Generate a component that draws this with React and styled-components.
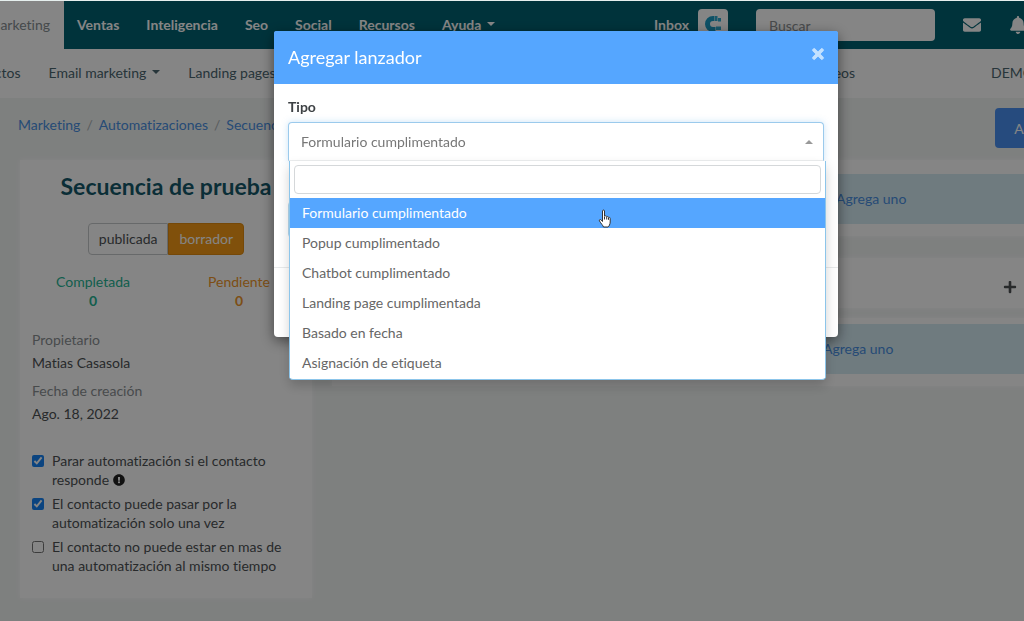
import React from "react"
import styled, { createGlobalStyle } from "styled-components"
import { FaEnvelope, FaBell, FaPlus, FaExclamationCircle, FaTimes } from "react-icons/fa"

const GlobalStyle = createGlobalStyle`
  * {
    box-sizing: border-box;
  }

  body {
    background: #f2f5f4;
    color: #4d5154;
    font-family: Lato, "Open Sans", sans-serif;
    font-size: 14px;
    font-variant-ligatures: none;
    line-height: 19px;
    margin: 0;
    min-height: 100vh;
    overflow: hidden;
  }

  a {
    color: #4a90e2;
    text-decoration: none;
  }

  button,
  input {
    font: inherit;
  }
`

const TopEdge = styled.div`
  background: #e6efee;
  height: 1px;
  position: relative;
  z-index: 20;
`

/* the canvas is wider than the window on both sides */
const Page = styled.div`
  margin: 0 -148px 0 -60px;
`

const NavBar = styled.nav`
  background: #006272;
  display: flex;
  height: 48px;
`

const NavLink = styled.a`
  align-items: center;
  background: ${props => (props.$active ? "#fff" : "transparent")};
  color: ${props => (props.$active ? "#868e92" : "#fff")};
  display: flex;
  font-weight: ${props => (props.$active ? 400 : 700)};
  gap: 6px;
  justify-content: flex-end;
  min-width: ${props => (props.$active ? "124px" : 0)};
  padding: 0 14px 2px 13px;
`

const Caret = styled.span`
  border: 4px solid transparent;
  border-bottom: 0;
  border-top-color: currentColor;
`

const NavTools = styled.div`
  align-items: center;
  display: flex;
  margin-left: auto;
  padding-right: 145px;
`

const InboxLink = styled.a`
  color: #fff;
  font-weight: 700;
  margin-right: 9px;
  padding-bottom: 2px;
`

const BrandMark = styled.a`
  background: #fff;
  border-radius: 4px;
  display: flex;
  height: 32px;
  justify-content: center;
  margin-right: 28px;
  padding-top: 6px;
  width: 30px;
`

const Search = styled.input`
  background: #fff;
  border: 0;
  border-radius: 4px;
  height: 32px;
  margin-right: 28px;
  padding: 0 13px;
  width: 179px;

  &::placeholder {
    color: #8b9093;
    opacity: 1;
  }
`

const IconLink = styled.a`
  color: #fff;
  display: flex;
  font-size: 18px;

  & + & {
    margin-left: 28px;
  }
`

const SubNav = styled.nav`
  align-items: center;
  background: #fff;
  display: flex;
  gap: 28px;
  height: 49px;
  padding: 0 138px 3px 18px;
`

const SubLink = styled.a`
  align-items: center;
  color: #4b6670;
  display: flex;
  gap: 6px;
  margin-left: ${props => (props.$end ? "auto" : 0)};
  margin-right: ${props => (props.$end ? "108px" : 0)};
`

const Heading = styled.header`
  align-items: flex-start;
  display: flex;
  height: 62px;
  justify-content: space-between;
  padding: 10px 95px 0 78px;
`

const Crumbs = styled.ol`
  display: flex;
  list-style-type: none;
  margin: 0;
  padding: 7px 0;

  li + li::before {
    color: #a9b0b3;
    content: "/";
    padding: 0 6px;
  }
`

const AddButton = styled.button`
  background: #4a90f2;
  border: 0;
  border-radius: 4px;
  color: #fff;
  height: 40px;
  width: 82px;
`

const Columns = styled.div`
  align-items: start;
  display: grid;
  gap: 20px;
  grid-template-columns: 292px 1fr;
  padding: 0 75px 0 80px;
`

const Card = styled.section`
  background: #fff;
  box-shadow: 0 0 5px #fff;
  padding: 12px 12px 18px;
`

const CardTitle = styled.h1`
  color: #14596a;
  font-size: 23px;
  font-weight: 700;
  line-height: 28px;
  margin: 0 0 23px;
  text-align: center;
`

const StateToggle = styled.div`
  display: flex;
  justify-content: center;
  margin-bottom: 17px;
`

const StateButton = styled.button`
  background: ${props => (props.$active ? "#f59a16" : "#fff")};
  border: 1px solid ${props => (props.$active ? "#e08b10" : "#c6cacc")};
  border-radius: ${props => (props.$active ? "0 4px 4px 0" : "4px 0 0 4px")};
  color: ${props => (props.$active ? "#fff" : "#4d5154")};
  height: 32px;
  padding: 0 10px 2px;
`

const Counters = styled.dl`
  display: grid;
  grid-template-columns: 1fr 1fr;
  margin: 0 -12px 20px;
  text-align: center;
`

const Counter = styled.div`
  color: ${props => props.$color};

  dd {
    font-weight: 700;
    margin: 0;
  }
`

const Details = styled.dl`
  margin: 0 0 28px;

  dt {
    color: #8b9093;
    margin-bottom: 4px;
  }

  dd {
    margin: 0 0 9px;
  }
`

const Check = styled.label`
  display: flex;
  gap: 8px;
  margin-bottom: 5px;

  input {
    accent-color: #1683f5;
    flex: none;
    height: 12px;
    margin: 4px 0 0;
    width: 12px;
  }

  svg {
    color: #222;
    font-size: 12px;
    vertical-align: -1px;
  }
`

const Flow = styled.main`
  display: flex;
  flex-direction: column;
`

const Panel = styled.section`
  background: #fff;
  box-shadow: 0 0 5px #fff;
  margin-bottom: ${props => (props.$tight ? "10px" : "22px")};
`

const Notice = styled.p`
  align-items: center;
  background: #d5ebf4;
  border: solid #fff;
  border-width: ${props => (props.$inner ? "6px 0 12px" : "14px 0 12px")};
  display: flex;
  margin: 0;
  padding: 15px 0 16px ${props => props.$indent};
`

const StepHeader = styled.div`
  display: flex;
  justify-content: flex-end;
  padding: 22px 80px 14px;
`

const Backdrop = styled.div`
  align-items: flex-start;
  background: rgba(0, 0, 0, 0.48);
  display: flex;
  inset: 0 -148px 0 -60px;
  justify-content: center;
  padding-top: 31px;
  position: fixed;
  z-index: 10;
`

const Dialog = styled.div`
  background: #fff;
  border-radius: 4px;
  box-shadow: 0 4px 14px rgba(0, 0, 0, 0.5);
  width: 564px;
`

const DialogHeader = styled.header`
  align-items: flex-start;
  background: #55a6ff;
  border-radius: 2px 2px 0 0;
  color: #fff;
  display: flex;
  height: 53px;
  justify-content: space-between;
  padding: 15px 14px;

  h2 {
    font-size: 18px;
    font-weight: 400;
    line-height: 22px;
    margin: 0;
  }
`

const CloseButton = styled.button`
  background: none;
  border: 0;
  color: #c3e1ff;
  display: flex;
  font-size: 16px;
  margin-right: -2px;
  padding: 0;

  path {
    stroke: currentColor;
    stroke-width: 30;
  }
`

const DialogBody = styled.div`
  border-bottom: 1px solid #e8eaeb;
  height: 184px;
  padding: 13px 14px 0;
`

const DialogFooter = styled.footer`
  height: 69px;
`

const FieldLabel = styled.label`
  color: #3d4144;
  display: block;
  font-weight: 700;
  margin-bottom: 6px;
`

const Picker = styled.div`
  position: relative;
`

const PickerButton = styled.button`
  align-items: center;
  background: #fff;
  border: 1px solid #9bcaec;
  border-bottom-color: #eceeef;
  border-radius: 4px 4px 0 0;
  box-shadow: 0 0 7px rgba(102, 175, 233, 0.35);
  color: #777;
  display: flex;
  height: 39px;
  justify-content: space-between;
  padding: 0 10px 0 12px;
  width: 100%;

  &::after {
    border: 4px solid transparent;
    border-bottom-color: #999;
    border-top: 0;
    content: "";
  }
`

const Dropdown = styled.div`
  background: #fff;
  border: 1px solid #8cc5ea;
  border-radius: 0 0 4px 4px;
  border-top: 0;
  box-shadow: 0 6px 12px rgba(0, 0, 0, 0.18);
  left: 1px;
  position: absolute;
  right: -2px;
  top: 39px;
`

const Filter = styled.input`
  border: 1px solid #d5d8da;
  border-radius: 4px;
  display: block;
  height: 29px;
  margin: 4px;
  outline: 0;
  width: calc(100% - 8px);
`

const Options = styled.ul`
  list-style-type: none;
  margin: 0;
  padding: 0 0 1px;
`

const Option = styled.li`
  background: ${props => (props.$active ? "#55a6ff" : "#fff")};
  color: ${props => (props.$active ? "#fff" : "#666")};
  line-height: 30px;
  padding: 0 12px;
`

const TextField = styled.input`
  border: 1px solid #b4d8ef;
  border-radius: 4px;
  display: block;
  height: 37px;
  margin-top: 40px;
  width: 100%;
`

const Pointer = styled.svg`
  left: 598px;
  position: fixed;
  top: 209px;
  z-index: 30;
`

const types = [
  "Formulario cumplimentado",
  "Popup cumplimentado",
  "Chatbot cumplimentado",
  "Landing page cumplimentada",
  "Basado en fecha",
  "Asignación de etiqueta",
]

const Navigation = () => (
  <>
    <NavBar>
      <NavLink href="#" $active>Marketing</NavLink>
      <NavLink href="#">Ventas</NavLink>
      <NavLink href="#">Inteligencia</NavLink>
      <NavLink href="#">Seo</NavLink>
      <NavLink href="#">Social</NavLink>
      <NavLink href="#">Recursos</NavLink>
      <NavLink href="#">Ayuda <Caret /></NavLink>
      <NavTools>
        <InboxLink href="#">Inbox</InboxLink>
        <BrandMark href="#" aria-label="Inicio">
          <svg width="18" height="18" viewBox="0 0 18 18">
            <path d="M10.500 3.500H9a5.500 5.500 0 0 0 0 11h2.500" fill="none" stroke="#1a9bc4" strokeWidth="5" />
            <path d="M11 1h2.500v5H11zM14 3h3v3.500h-3zM12 11.500h5V15h-5z" fill="#2fa9cf" />
          </svg>
        </BrandMark>
        <Search type="search" aria-label="Buscar" placeholder="Buscar" />
        <IconLink href="#" aria-label="Mensajes"><FaEnvelope /></IconLink>
        <IconLink href="#" aria-label="Avisos"><FaBell /></IconLink>
      </NavTools>
    </NavBar>
    <SubNav>
      <SubLink href="#">Contactos</SubLink>
      <SubLink href="#">Email marketing <Caret /></SubLink>
      <SubLink href="#">Landing pages</SubLink>
      <SubLink href="#" $end>Vídeos</SubLink>
      <SubLink href="#">DEMO</SubLink>
    </SubNav>
  </>
)

const SequenceCard = () => (
  <Card>
    <CardTitle>Secuencia de prueba</CardTitle>
    <StateToggle>
      <StateButton>publicada</StateButton>
      <StateButton $active>borrador</StateButton>
    </StateToggle>
    <Counters>
      <Counter $color="#25b594">
        <dt>Completada</dt>
        <dd>0</dd>
      </Counter>
      <Counter $color="#f0962a">
        <dt>Pendiente</dt>
        <dd>0</dd>
      </Counter>
    </Counters>
    <Details>
      <dt>Propietario</dt>
      <dd>Matias Casasola</dd>
      <dt>Fecha de creación</dt>
      <dd>Ago. 18, 2022</dd>
    </Details>
    <Check>
      <input type="checkbox" defaultChecked />
      <span>Parar automatización si el contacto responde <FaExclamationCircle /></span>
    </Check>
    <Check>
      <input type="checkbox" defaultChecked />
      <span>El contacto puede pasar por la automatización solo una vez</span>
    </Check>
    <Check>
      <input type="checkbox" />
      <span>El contacto no puede estar en mas de una automatización al mismo tiempo</span>
    </Check>
  </Card>
)

const TriggerDialog = () => (
  <Backdrop>
    <Dialog role="dialog" aria-labelledby="dialog-title">
      <DialogHeader>
        <h2 id="dialog-title">Agregar lanzador</h2>
        <CloseButton aria-label="Cerrar"><FaTimes /></CloseButton>
      </DialogHeader>
      <DialogBody>
        <FieldLabel htmlFor="tipo">Tipo</FieldLabel>
        <Picker>
          <PickerButton id="tipo" aria-haspopup="listbox">Formulario cumplimentado</PickerButton>
          <Dropdown>
            <Filter aria-label="Filtrar" />
            <Options role="listbox">
              {types.map((type, i) => (
                <Option key={type} role="option" $active={i === 0}>{type}</Option>
              ))}
            </Options>
          </Dropdown>
        </Picker>
        <TextField aria-label="Formulario" />
      </DialogBody>
      <DialogFooter />
    </Dialog>
  </Backdrop>
)

const App = () => (
  <>
    <GlobalStyle />
    <TopEdge />
    <Page>
      <Navigation />
      <Heading>
        <Crumbs>
          <li><a href="#">Marketing</a></li>
          <li><a href="#">Automatizaciones</a></li>
          <li><a href="#">Secuencia</a></li>
        </Crumbs>
        <AddButton>Activar</AddButton>
      </Heading>
      <Columns>
        <SequenceCard />
        <Flow>
          <Panel>
            <Notice $indent="504px"><a href="#">Agrega uno</a></Notice>
          </Panel>
          <Panel $tight>
            <StepHeader><FaPlus /></StepHeader>
          </Panel>
          <Panel>
            <Notice $inner $indent="491px"><a href="#">Agrega uno</a></Notice>
          </Panel>
        </Flow>
      </Columns>
    </Page>
    <TriggerDialog />
    <Pointer width="14" height="19" viewBox="0 0 14 19">
      <path
        d="M4.500 2c0-1.300 2-1.300 2 0v5l1-.2c.6 0 1 .3 1.200.8.9-.3 1.500 0 1.700.7 1-.2 1.800.2 1.800 1.300v3.400c0 2-1.200 4.500-2.200 5H5.500c-.5-1.500-2.500-3.500-4-6-.7-1.300.7-2 1.700-1l1.300 1.500z"
        fill="#fff"
        stroke="#333"
      />
      <path d="M6.500 7.500v3M8.700 8v2.500M10.500 8.800v2" stroke="#333" />
    </Pointer>
  </>
)

export default App
